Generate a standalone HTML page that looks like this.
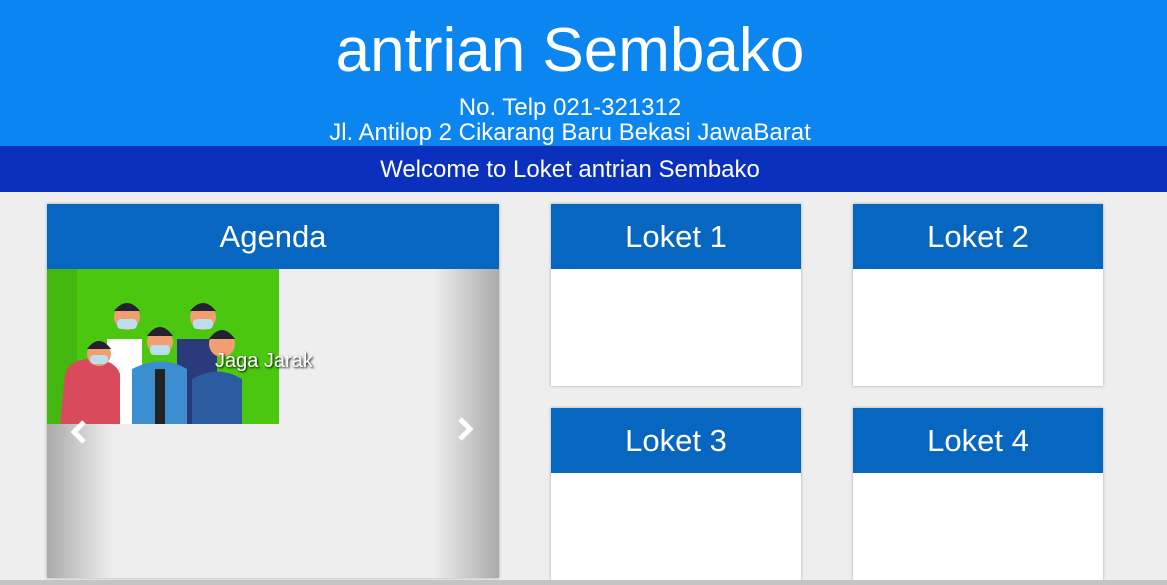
<!DOCTYPE html>
<html><head><style>
body{margin:0;width:1167px;height:585px;overflow:hidden;background:#eeeeee;font-family:"Liberation Sans",Arial,sans-serif;position:relative}
.top{position:absolute;left:0;top:0;width:1167px;height:146px;background:#0b86f0;color:#fff;text-align:center}
.c{position:absolute;left:0;width:1140px;text-align:center}
.top h1{margin:0;top:16px;font-size:62px;font-weight:normal;line-height:70px}
.top .l1{top:95px;font-size:24px;line-height:26px}
.top .l2{top:120px;font-size:24px;line-height:26px}
.band{position:absolute;top:146px;left:0;width:1167px;height:46px;background:#0a30bd;color:#fff;font-size:24px;line-height:46px}
.card{position:absolute;background:#fff;box-shadow:0 0 3px rgba(0,0,0,.3)}
.hd{height:65px;background:#0766bf;color:#fff;font-size:31px;text-align:center;line-height:65px}
.car{position:absolute;left:47px;top:269px;width:452px;height:309px;background:linear-gradient(to right,#aaa 0,#eee 65px,#eee 387px,#aaa 452px)}
.bot{position:absolute;left:0;top:580px;width:1167px;height:5px;background:#c4c4c4}
</style></head><body>
<div class="top"><h1 class="c">antrian Sembako</h1><div class="c l1">No. Telp 021-321312</div><div class="c l2">Jl. Antilop 2 Cikarang Baru Bekasi JawaBarat</div></div>
<div class="band"><div class="c" style="top:1px">Welcome to Loket antrian Sembako</div></div>
<div class="card" style="left:47px;top:204px;width:452px;height:374px;background:#eee"><div class="hd">Agenda</div></div>
<div class="car">
<svg width="232" height="155" style="position:absolute;left:0;top:0">
<rect width="232" height="155" fill="#4cc710"/>
<rect width="30" height="155" fill="#3aa80c" opacity=".5"/>
<path d="M60 70 h35 v85 h-35z" fill="#fff"/><circle cx="80" cy="48" r="13" fill="#f0a070"/><path d="M67 42 q13 -16 26 0z" fill="#223"/><rect x="70" y="50" width="20" height="10" rx="4" fill="#bde"/>
<path d="M130 70 h40 v85 h-40z" fill="#2a3a7a"/><circle cx="156" cy="48" r="13" fill="#f0a070"/><path d="M143 42 q13 -16 26 0z" fill="#223"/><rect x="146" y="50" width="20" height="10" rx="4" fill="#bde"/>
<path d="M18 105 q5 -15 25 -15 q25 0 30 15 v50 h-60z" fill="#d94a5c"/><circle cx="52" cy="85" r="12" fill="#f0a070"/><path d="M40 80 q12 -16 24 0z" fill="#223"/><rect x="43" y="86" width="18" height="9" rx="4" fill="#bde"/>
<path d="M85 100 q30 -15 55 0 v55 h-55z" fill="#3b8ed0"/><rect x="108" y="100" width="10" height="55" fill="#222"/><circle cx="113" cy="73" r="13" fill="#f0a070"/><path d="M100 67 q13 -18 26 0z" fill="#223"/><rect x="103" y="76" width="20" height="10" rx="4" fill="#bde"/>
<path d="M145 110 q25 -15 50 0 v45 h-50z" fill="#2a5aa0"/><circle cx="175" cy="75" r="13" fill="#f0a070"/><path d="M162 70 q13 -18 26 0z" fill="#223"/>
</svg>
<div style="position:absolute;left:168px;top:81px;color:#fff;font-size:20px;text-shadow:1px 1px 2px #000">Jaga Jarak</div>
<svg width="452" height="40" style="position:absolute;left:0;top:145px">
<polyline points="37,8 27,18 37,28" fill="none" stroke="#fff" stroke-width="5"/>
<polyline points="413,5 423,15 413,25" fill="none" stroke="#fff" stroke-width="5"/>
</svg>
</div>
<div class="card" style="left:551px;top:204px;width:250px;height:182px"><div class="hd">Loket 1</div></div>
<div class="card" style="left:853px;top:204px;width:250px;height:182px"><div class="hd">Loket 2</div></div>
<div class="card" style="left:551px;top:408px;width:250px;height:172px"><div class="hd">Loket 3</div></div>
<div class="card" style="left:853px;top:408px;width:250px;height:172px"><div class="hd">Loket 4</div></div>
<div class="bot"></div>
</body></html>
